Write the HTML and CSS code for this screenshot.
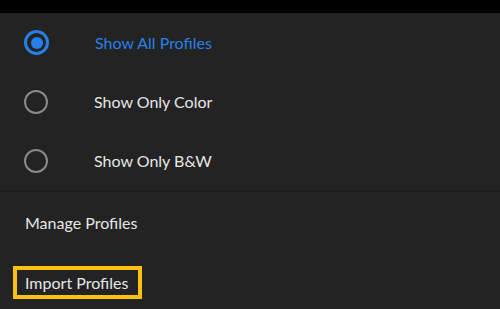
FILE: index.html
```html
<!DOCTYPE html>
<html lang="en">
<head>
  <meta charset="UTF-8" />
  <meta name="viewport" content="width=device-width, initial-scale=1.0" />
  <title>Profiles Menu</title>
  <link rel="stylesheet" href="styles.css">
</head>
<body>
  <div class="topbar"></div>
  <div class="menu">
    <div class="filters">
      <div class="option selected">
        <span class="radio"></span>
        <span class="label">Show All Profiles</span>
      </div>
      <div class="option">
        <span class="radio"></span>
        <span class="label">Show Only Color</span>
      </div>
      <div class="option">
        <span class="radio"></span>
        <span class="label">Show Only B&amp;W</span>
      </div>
    </div>
    <div class="actions">
      <div class="action"><span class="text">Manage Profiles</span></div>
      <div class="action highlight"><span class="text">Import Profiles</span></div>
    </div>
  </div>
</body>
</html>
```

FILE: styles.css
```css
body {
  margin: 0;
  background: #232323;
  font-family: Lato, 'Noto Sans', sans-serif;
  font-size: 16px;
  color: #e6e6e6;
  height: 309px;
  overflow: hidden;
}
.topbar {
  height: 13px;
  background: #000;
}
.filters {
  border-bottom: 2px solid #1b1b1b;
}
.option {
  display: flex;
  align-items: center;
  height: 59px;
  padding-left: 24px;
}
.radio {
  width: 20px;
  height: 20px;
  border: 2.5px solid #8a8a8a;
  border-radius: 50%;
  display: flex;
  align-items: center;
  justify-content: center;
  margin-right: 46px;
}
.option.selected .radio {
  border: 3px solid #2680eb;
  width: 19px;
  height: 19px;
}
.option.selected .radio::after {
  content: "";
  width: 12px;
  height: 12px;
  border-radius: 50%;
  background: #2680eb;
}
.option.selected .label {
  color: #2680eb;
}
.action {
  display: flex;
  align-items: center;
  height: 60px;
  padding-left: 13px;
}
.action .text {
  padding: 3px 10px 3px 8px;
  border: 4px solid transparent;
}
.action.highlight .text {
  border-color: #fcc10f;
}
```
